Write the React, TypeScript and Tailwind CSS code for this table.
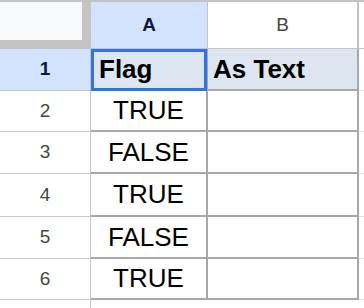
import React from 'react';

type Row = {
    num: number;
    a: string;
    b: string;
    h: string;
};

const rows: Row[] = [
    { num: 2, a: 'TRUE', b: '', h: 'h-[41px]' },
    { num: 3, a: 'FALSE', b: '', h: 'h-[42px]' },
    { num: 4, a: 'TRUE', b: '', h: 'h-[43px]' },
    { num: 5, a: 'FALSE', b: '', h: 'h-[42px]' },
    { num: 6, a: 'TRUE', b: '', h: 'h-[41px]' },
];

const App: React.FC = () => {
    return (
        <div className="w-[364px] h-[308px] overflow-hidden bg-white font-['Liberation_Sans',Arial,sans-serif]">
            {/* Column headers */}
            <div className="flex h-[49px]">
                <div className="w-[91px] h-full bg-[#c4c4c4] pt-[2px] pr-[9px] pb-[9px]">
                    <div className="w-full h-full bg-[#f8f9fa]" />
                </div>
                <div className="w-[117px] h-full bg-[#d3e3fd] border-t-2 border-b border-r border-[#c4c4c4] flex items-center justify-center text-[19px] font-bold text-[#0b1b3f]">
                    A
                </div>
                <div className="w-[151px] h-full bg-white border-t-2 border-b border-r-2 border-[#c4c4c4] flex items-center justify-center text-[19px] text-[#444746]">
                    B
                </div>
                <div className="flex-1 h-full bg-white border-t-2 border-b border-[#c4c4c4]" />
            </div>

            {/* Row 1 */}
            <div className="flex h-[42px]">
                <div className="w-[91px] h-full bg-[#d3e3fd] border-r border-b border-[#c4c4c4] flex items-center justify-center text-[19px] font-bold text-[#0b1b3f]">
                    1
                </div>
                <div className="relative w-[117px] h-full bg-[#dde6f0] border-r-2 border-b-2 border-[#a8a8a8] flex items-center pl-[8px] text-[26px] font-bold text-black">
                    Flag
                    <div className="absolute left-0 top-0 w-[116px] h-[42px] border-[3px] border-[#2f74e4]" />
                </div>
                <div className="w-[151px] h-full bg-[#dde6f0] border-r-2 border-b-2 border-[#a8a8a8] flex items-center pl-[5px] text-[26px] font-bold text-black">
                    As Text
                </div>
                <div className="flex-1 h-full bg-white border-b border-[#e0e0e0]" />
            </div>

            {/* Data rows */}
            {rows.map((row) => (
                <div key={row.num} className={`flex ${row.h}`}>
                    <div className="w-[91px] h-full bg-white border-r border-b border-[#c7c7c7] flex items-center justify-center text-[19px] text-[#444746]">
                        {row.num}
                    </div>
                    <div className="w-[117px] h-full bg-white border-r-2 border-b-2 border-[#a8a8a8] flex items-center justify-center text-[26px] text-black">
                        {row.a}
                    </div>
                    <div className="w-[151px] h-full bg-white border-r-2 border-b-2 border-[#a8a8a8] flex items-center pl-[5px] text-[26px] text-black">
                        {row.b}
                    </div>
                    <div className="flex-1 h-full bg-white border-b border-[#e0e0e0]" />
                </div>
            ))}

            {/* Partial row below */}
            <div className="flex h-[20px]">
                <div className="w-[91px] h-full bg-white border-r border-[#c7c7c7]" />
            </div>
        </div>
    );
};

export default App;
